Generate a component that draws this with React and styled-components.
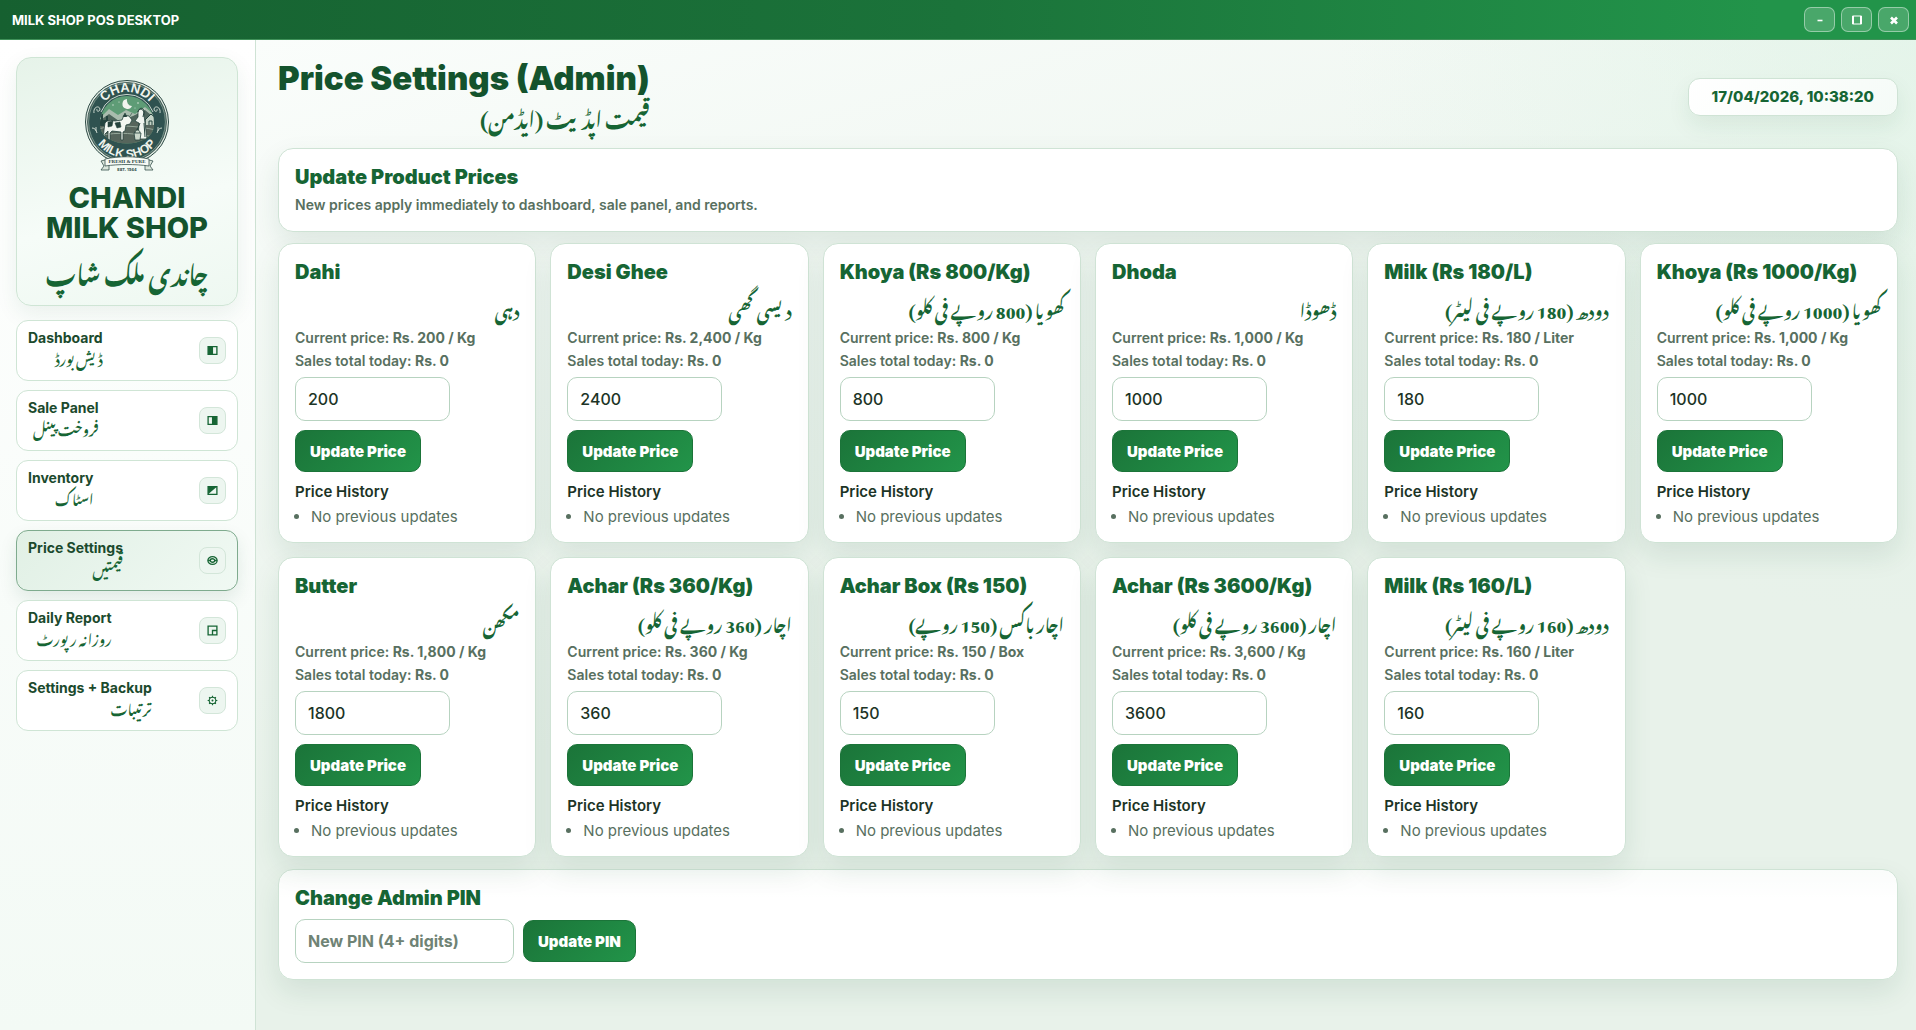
import React, { useState } from "react";
import styled, { createGlobalStyle, css } from "styled-components";

const GlobalStyle = createGlobalStyle`
  * {
    box-sizing: border-box;
  }

  body {
    margin: 0;
    color: #1c3426;
    font-family: Inter, "Liberation Sans", sans-serif;
    font-size: 14px;
  }

  button,
  input {
    font-family: inherit;
  }
`;

const Shell = styled.div`
  display: flex;
  flex-direction: column;
  min-height: 100vh;
`;

const TitleBar = styled.header`
  display: flex;
  align-items: center;
  justify-content: space-between;
  height: 40px;
  padding: 0 7px 0 12px;
  color: #fff;
  background: linear-gradient(90deg, #166030, #1b733a 50%, #22944a 92%);
  border-bottom: 1px solid #3f9159;
`;

const TitleText = styled.span`
  font-size: 13px;
  font-weight: 700;
`;

const WindowControls = styled.div`
  display: flex;
  gap: 6px;
`;

const WindowButton = styled.button`
  display: grid;
  place-items: center;
  width: 31px;
  height: 25px;
  padding: 0;
  color: #fff;
  background: rgba(255, 255, 255, 0.18);
  border: 1px solid rgba(255, 255, 255, 0.42);
  border-radius: 7px;
`;

const Body = styled.div`
  display: flex;
  flex: 1;
`;

const Sidebar = styled.aside`
  flex: 0 0 256px;
  padding: 17px 17px 16px 16px;
  background: linear-gradient(180deg, #fff, #f3faf5);
  border-right: 1px solid #cfe3d5;
`;

const Brand = styled.div`
  display: flex;
  flex-direction: column;
  align-items: center;
  height: 249px;
  margin-bottom: 14px;
  padding-top: 22px;
  background: linear-gradient(165deg, #e6f3e9, #f6fcf8 60%, #eef8f1);
  border: 1px solid #cfe5d5;
  border-radius: 15px;
  box-shadow: 0 8px 22px rgba(22, 83, 45, 0.08);
`;

const BrandName = styled.h1`
  margin: 11px 0 0;
  color: #14532d;
  font-size: 29px;
  font-weight: 800;
  line-height: 30px;
  text-align: center;
`;

const Urdu = styled.span`
  display: block;
  direction: rtl;
  color: #166534;
  font-family: "Noto Nastaliq Urdu", "Liberation Serif", "DejaVu Sans", serif;
  font-weight: ${(p) => p.$weight || 700};
  font-size: ${(p) => p.$size}px;
  line-height: ${(p) => p.$line}px;
  white-space: nowrap;
`;

const Nav = styled.nav`
  display: flex;
  flex-direction: column;
  gap: 9px;
`;

const NavItem = styled.a`
  display: flex;
  align-items: center;
  justify-content: space-between;
  height: 61px;
  padding: 0 11px;
  color: #1b4a2d;
  text-decoration: none;
  background: #fff;
  border: 1px solid #cfe5d5;
  border-radius: 12px;

  ${(p) =>
    p.$active &&
    css`
      background: linear-gradient(135deg, #e1f0e5, #f0f9f3);
      border-color: #7fab8e;
      box-shadow: 0 8px 18px rgba(22, 83, 45, 0.1);
    `}
`;

const NavLabel = styled.span`
  padding-bottom: 4px;
  font-size: 14px;
  font-weight: 700;
  line-height: 16px;
`;

const NavIcon = styled.span`
  display: grid;
  place-items: center;
  width: 27px;
  height: 27px;
  color: #166534;
  background: #edf6f0;
  border: 1px solid #d3e6d9;
  border-radius: 8px;
`;

const Main = styled.main`
  flex: 1;
  min-width: 0;
  padding: 18px 18px 24px 22px;
  background:
    radial-gradient(circle at 100% 0, rgba(220, 243, 228, 0.55), transparent 30%),
    linear-gradient(165deg, #fafdfb, #e8f2ea 55%, #e8f2ea);
`;

const PageHeader = styled.div`
  display: flex;
  align-items: center;
  justify-content: space-between;
  height: 78px;
  margin-bottom: 12px;
`;

const PageTitle = styled.h2`
  margin: 0;
  color: #14532d;
  font-size: 33px;
  font-weight: 900;
  line-height: 38px;
`;

const Clock = styled.time`
  padding: 0 23px;
  color: #166534;
  font-size: 15px;
  font-weight: 800;
  line-height: 36px;
  background: linear-gradient(135deg, #fff, #f5fbf7);
  border: 1px solid #cfe3d5;
  border-radius: 12px;
  box-shadow: 0 10px 22px rgba(22, 83, 45, 0.08);
`;

const Panel = styled.section`
  padding: 16px;
  background: ${(p) => (p.$glass ? "linear-gradient(rgba(255, 255, 255, 0.8), #fff 28px)" : "#fff")};
  border: 1px solid #cfe3d5;
  border-radius: 15px;
  box-shadow: 0 12px 28px rgba(22, 83, 45, 0.1);
`;

const Heading = styled.h3`
  margin: 0 0 6px;
  color: #166534;
  font-size: 20px;
  font-weight: 900;
  line-height: 24px;
`;

const Note = styled.p`
  margin: 0;
  color: #587060;
  font-size: 14px;
  font-weight: 600;
  line-height: 20px;
`;

const Grid = styled.div`
  display: grid;
  grid-template-columns: repeat(auto-fill, minmax(240px, 1fr));
  gap: 14px;
  margin: 11px 0 12px;
`;

const PriceForm = styled.form`
  display: flex;
  flex-direction: column;
  align-items: flex-start;
  gap: 9px;
  margin-top: 5px;
`;

const PinForm = styled.form`
  display: flex;
  align-items: center;
  gap: 9px;
  margin-top: 9px;
`;

const Line = styled.p`
  margin: 0;
  color: #587060;
  font-weight: 600;
  line-height: 23px;

  strong {
    font-weight: 700;
  }
`;

const Field = styled.input`
  width: ${(p) => p.$width}px;
  height: 44px;
  padding: 0 12px;
  color: #1c3426;
  font-size: 16px;
  font-weight: ${(p) => p.$weight || 500};
  background: #fff;
  border: 1px solid #b7d3c0;
  border-radius: 10px;

  &::placeholder {
    color: #6f8375;
    opacity: 1;
  }
`;

const Button = styled.button`
  height: 42px;
  padding: 0 14px;
  color: #fff;
  font-size: 15px;
  font-weight: 900;
  background: linear-gradient(135deg, #1b7439, #229449);
  border: 1px solid #1b7439;
  border-radius: 10px;
`;

const HistoryTitle = styled.h4`
  margin: 9px 0 0;
  color: #1c3426;
  font-size: 15px;
  font-weight: 600;
  line-height: 22px;
`;

const History = styled.ul`
  margin: 5px 0 0;
  padding-left: 16px;
  color: #587060;
  font-size: 15px;
  line-height: 18px;
`;

const products = [
  { name: "Dahi", urdu: "دہی", price: 200, unit: "Kg" },
  { name: "Desi Ghee", urdu: "دیسی گھی", price: 2400, unit: "Kg" },
  { name: "Khoya (Rs 800/Kg)", urdu: "کھویا (800 روپے فی کلو)", price: 800, unit: "Kg" },
  { name: "Dhoda", urdu: "ڈھوڈا", price: 1000, unit: "Kg" },
  { name: "Milk (Rs 180/L)", urdu: "دودھ (180 روپے فی لیٹر)", price: 180, unit: "Liter" },
  { name: "Khoya (Rs 1000/Kg)", urdu: "کھویا (1000 روپے فی کلو)", price: 1000, unit: "Kg" },
  { name: "Butter", urdu: "مکھن", price: 1800, unit: "Kg" },
  { name: "Achar (Rs 360/Kg)", urdu: "اچار (360 روپے فی کلو)", price: 360, unit: "Kg" },
  { name: "Achar Box (Rs 150)", urdu: "اچار باکس (150 روپے)", price: 150, unit: "Box" },
  { name: "Achar (Rs 3600/Kg)", urdu: "اچار (3600 روپے فی کلو)", price: 3600, unit: "Kg" },
  { name: "Milk (Rs 160/L)", urdu: "دودھ (160 روپے فی لیٹر)", price: 160, unit: "Liter" },
];

const navItems = [
  { label: "Dashboard", urdu: "ڈیش بورڈ", icon: "left" },
  { label: "Sale Panel", urdu: "فروخت پینل", icon: "right" },
  { label: "Inventory", urdu: "اسٹاک", icon: "diagonal" },
  { label: "Price Settings", urdu: "قیمتیں", icon: "coin", active: true },
  { label: "Daily Report", urdu: "روزانہ رپورٹ", icon: "corner" },
  { label: "Settings + Backup", urdu: "ترتیبات", icon: "gear" },
];

const outlines = {
  left: <path d="M1 1.5h8v7H1z" />,
  right: <path d="M1 1.5h8v7H1z" />,
  diagonal: <path d="M1 1.5h8v7H1z" />,
  coin: (
    <>
      <ellipse cx="5" cy="5" rx="4.2" ry="3.6" />
      <ellipse cx="5" cy="5" rx="2" ry="1.6" />
      <path d="M1 5h2M7 5h2" />
    </>
  ),
  corner: <path d="M1 1h8v8H1zM5 9V5h4" />,
  gear: (
    <>
      <circle cx="5" cy="5" r="3" />
      <circle cx="5" cy="5" r="0.4" />
      <path d="M5 .6V2M5 8v1.4M.6 5H2M8 5h1.4M1.9 1.9l1 1M7.1 7.1l1 1M8.1 1.9l-1 1M2.9 7.1l-1 1" />
    </>
  ),
};

const fills = {
  left: <path d="M1 1.5h4.5v7H1z" fill="currentColor" stroke="none" />,
  right: <path d="M4.5 1.5H9v7H4.5z" fill="currentColor" stroke="none" />,
  diagonal: <path d="M1 8.5v-7h8z" fill="currentColor" stroke="none" />,
};

const Glyph = ({ name }) => (
  <svg width="11" height="11" viewBox="0 0 10 10" fill="none" stroke="currentColor" strokeWidth={name === "gear" ? 1 : 1.2}>
    {outlines[name]}
    {fills[name]}
  </svg>
);

const Logo = () => (
  <svg width="86" height="92" viewBox="0 0 86 92" role="img" aria-label="Chandi Milk Shop">
    <defs>
      <path id="arcTop" d="M13 42a30 30 0 0 1 60 0" />
      <path id="arcBottom" d="M6 41a37 37 0 0 0 74 0" />
      <clipPath id="scene">
        <path d="M16 43a27 27 0 0 1 54 0c0 9-4 13-9 16-11 6-25 6-36 0-5-3-9-7-9-16z" />
      </clipPath>
    </defs>
    <circle cx="43" cy="42" r="41.5" fill="#dfe9e1" stroke="#2d4a45" />
    <circle cx="43" cy="42" r="39.4" fill="#2f5250" stroke="#455f59" />
    <circle cx="43" cy="42" r="38.4" fill="none" stroke="#a9bdaf" strokeWidth="0.6" />
    <g clipPath="url(#scene)">
      <path d="M14 14h60v50H14z" fill="#5e9c76" />
      <path d="M14 40l11-11 9 6 8-5 9 4 10-7 14 12v8H14z" fill="#a9bcae" />
      <path d="M14 42l11-8 10 7 14-5 12-6 13 11v8H14z" fill="#4e655c" />
      <path d="M14 42h60v24H14z" fill="#56655c" />
      <path d="M14 49c18-5 39-3 58 1M15 56c19-5 38-2 56 1" stroke="#95a79a" fill="none" />
      <path d="M14 39h3v-5h2v6h3v-4h2v10H14z" fill="#24443f" />
      <path d="M62 39l5-5 6 5v6H62z" fill="#c5d3c7" />
      <path d="M61 40l6-6 6 6M65 45v-4h3v4" stroke="#24443f" fill="none" />
      <g fill="#dce9dd">
        <circle cx="29" cy="25" r="0.7" />
        <circle cx="35" cy="22" r="0.6" />
        <circle cx="54" cy="23" r="0.8" />
        <circle cx="60" cy="29" r="0.6" />
        <circle cx="51" cy="28" r="0.5" />
      </g>
      <path d="M43 19a5 5 0 1 0 5 7 5.6 5.6 0 0 1-5-7z" fill="#f0f5ef" />
      <path
        d="M21 43c2-3 6-3 10-2l7-1 2-5 5 1 3 4-2 4-4 1-1 6-2 1v8h-2v-8l-9-1-2 2v7h-2v-9l-3 3-1 6h-1l1-10z"
        fill="#f3f7f1"
        stroke="#26433d"
        strokeWidth="0.8"
      />
      <path d="M24 42l5-1-1 5-4 1zM31 43l5-1 1 5-4 1zM39 37l2-4 2 4M46 36l2-3" fill="#26433d" stroke="#26433d" strokeWidth="0.6" />
      <path d="M54 31c3-4 7 0 6 4l1 8 2 16h-9l1-16-4-2 3-4z" fill="#f0f5ef" stroke="#26433d" strokeWidth="0.8" />
      <path d="M54 32c1-5 6-5 6 0l-1 5M56 43l-3 7M60 43l1 14" fill="none" stroke="#26433d" />
      <path d="M50 53h7l-1 7h-5zM51 53c0-4 5-4 5 0" fill="#cad8cb" stroke="#26433d" strokeWidth="0.8" />
    </g>
    <g fill="none" stroke="#dce7dd" strokeWidth="0.9">
      <path d="M17 32a28 28 0 0 1 52 0" />
      <path d="M10 33c-1-6 5-8 6-4 0 3-4 3-3 0M76 33c1-6-5-8-6-4 0 3 4 3 3 0" />
      <path d="M8 48c3 0 4 2 5 5M12 47v4M78 48c-3 0-4 2-5 5M74 47v4" />
    </g>
    <g fill="#f0f4ed" fontFamily="Liberation Sans, sans-serif" fontWeight="700" textAnchor="middle">
      <text fontSize="13">
        <textPath href="#arcTop" startOffset="50%">CHANDI</textPath>
      </text>
      <text fontSize="12">
        <textPath href="#arcBottom" startOffset="50%">MILK SHOP</textPath>
      </text>
    </g>
    <path d="M17 81l8-2v11h-8l3-4zM69 81l-8-2v11h8l-3-4z" fill="#dce7dd" stroke="#36514b" strokeWidth="0.8" />
    <path d="M21 79c14-3 30-3 44 0v7c-14-2-30-2-44 0z" fill="#f7faf5" stroke="#36514b" strokeWidth="0.8" />
    <text x="43" y="83" fill="#26433d" fontFamily="Liberation Serif, serif" fontSize="5" fontWeight="700" textAnchor="middle">
      FRESH &amp; PURE
    </text>
    <text x="43" y="91" fill="#26433d" fontFamily="Inter, sans-serif" fontSize="4" fontWeight="700" textAnchor="middle">
      EST. 1944
    </text>
  </svg>
);

const ProductCard = ({ product }) => {
  const [price, setPrice] = useState(String(product.price));

  return (
    <Panel>
      <Heading>{product.name}</Heading>
      <Urdu $size={17} $line={36}>{product.urdu}</Urdu>
      <Line>
        Current price: <strong>Rs. {product.price.toLocaleString("en-US")} / {product.unit}</strong>
      </Line>
      <Line>
        Sales total today: <strong>Rs. 0</strong>
      </Line>
      <PriceForm onSubmit={(e) => e.preventDefault()}>
        <Field
          $width={155}
          aria-label={`${product.name} price`}
          value={price}
          onChange={(e) => setPrice(e.target.value)}
        />
        <Button type="submit">Update Price</Button>
      </PriceForm>
      <HistoryTitle>Price History</HistoryTitle>
      <History>
        <li>No previous updates</li>
      </History>
    </Panel>
  );
};

const App = () => {
  const [pin, setPin] = useState("");

  return (
    <Shell>
      <GlobalStyle />
      <TitleBar>
        <TitleText>MILK SHOP POS DESKTOP</TitleText>
        <WindowControls>
          <WindowButton aria-label="Minimize">
            <svg width="12" height="12" viewBox="0 0 12 12" stroke="currentColor" strokeWidth="1.6">
              <path d="M3.5 6.5h5" />
            </svg>
          </WindowButton>
          <WindowButton aria-label="Maximize">
            <svg width="12" height="12" viewBox="0 0 12 12" fill="none" stroke="currentColor">
              <path d="M1.5 2h9v8h-9z" />
              <path d="M2 2v8M10 2v8" strokeWidth="2" />
            </svg>
          </WindowButton>
          <WindowButton aria-label="Close">
            <svg width="12" height="12" viewBox="0 0 12 12" stroke="currentColor" strokeWidth="2.6">
              <path d="M3 3.5l6 6M9 3.5l-6 6" />
            </svg>
          </WindowButton>
        </WindowControls>
      </TitleBar>
      <Body>
        <Sidebar>
          <Brand>
            <Logo />
            <BrandName>
              CHANDI
              <br />
              MILK SHOP
            </BrandName>
            <Urdu $size={25} $line={54}>چاندی ملک شاپ</Urdu>
          </Brand>
          <Nav>
            {navItems.map((item) => (
              <NavItem key={item.label} href="#" $active={item.active}>
                <NavLabel>
                  {item.label}
                  <Urdu $size={14} $line={22} $weight={600}>{item.urdu}</Urdu>
                </NavLabel>
                <NavIcon>
                  <Glyph name={item.icon} />
                </NavIcon>
              </NavItem>
            ))}
          </Nav>
        </Sidebar>
        <Main>
          <PageHeader>
            <div>
              <PageTitle>Price Settings (Admin)</PageTitle>
              <Urdu $size={20} $line={38}>قیمت اپڈیٹ (ایڈمن)</Urdu>
            </div>
            <Clock>17/04/2026, 10:38:20</Clock>
          </PageHeader>
          <Panel>
            <Heading>Update Product Prices</Heading>
            <Note>New prices apply immediately to dashboard, sale panel, and reports.</Note>
          </Panel>
          <Grid>
            {products.map((product) => (
              <ProductCard key={product.name} product={product} />
            ))}
          </Grid>
          <Panel $glass>
            <Heading>Change Admin PIN</Heading>
            <PinForm onSubmit={(e) => e.preventDefault()}>
              <Field
                $width={219}
                $weight={700}
                aria-label="New PIN"
                placeholder="New PIN (4+ digits)"
                value={pin}
                onChange={(e) => setPin(e.target.value)}
              />
              <Button type="submit">Update PIN</Button>
            </PinForm>
          </Panel>
        </Main>
      </Body>
    </Shell>
  );
};

export default App;
